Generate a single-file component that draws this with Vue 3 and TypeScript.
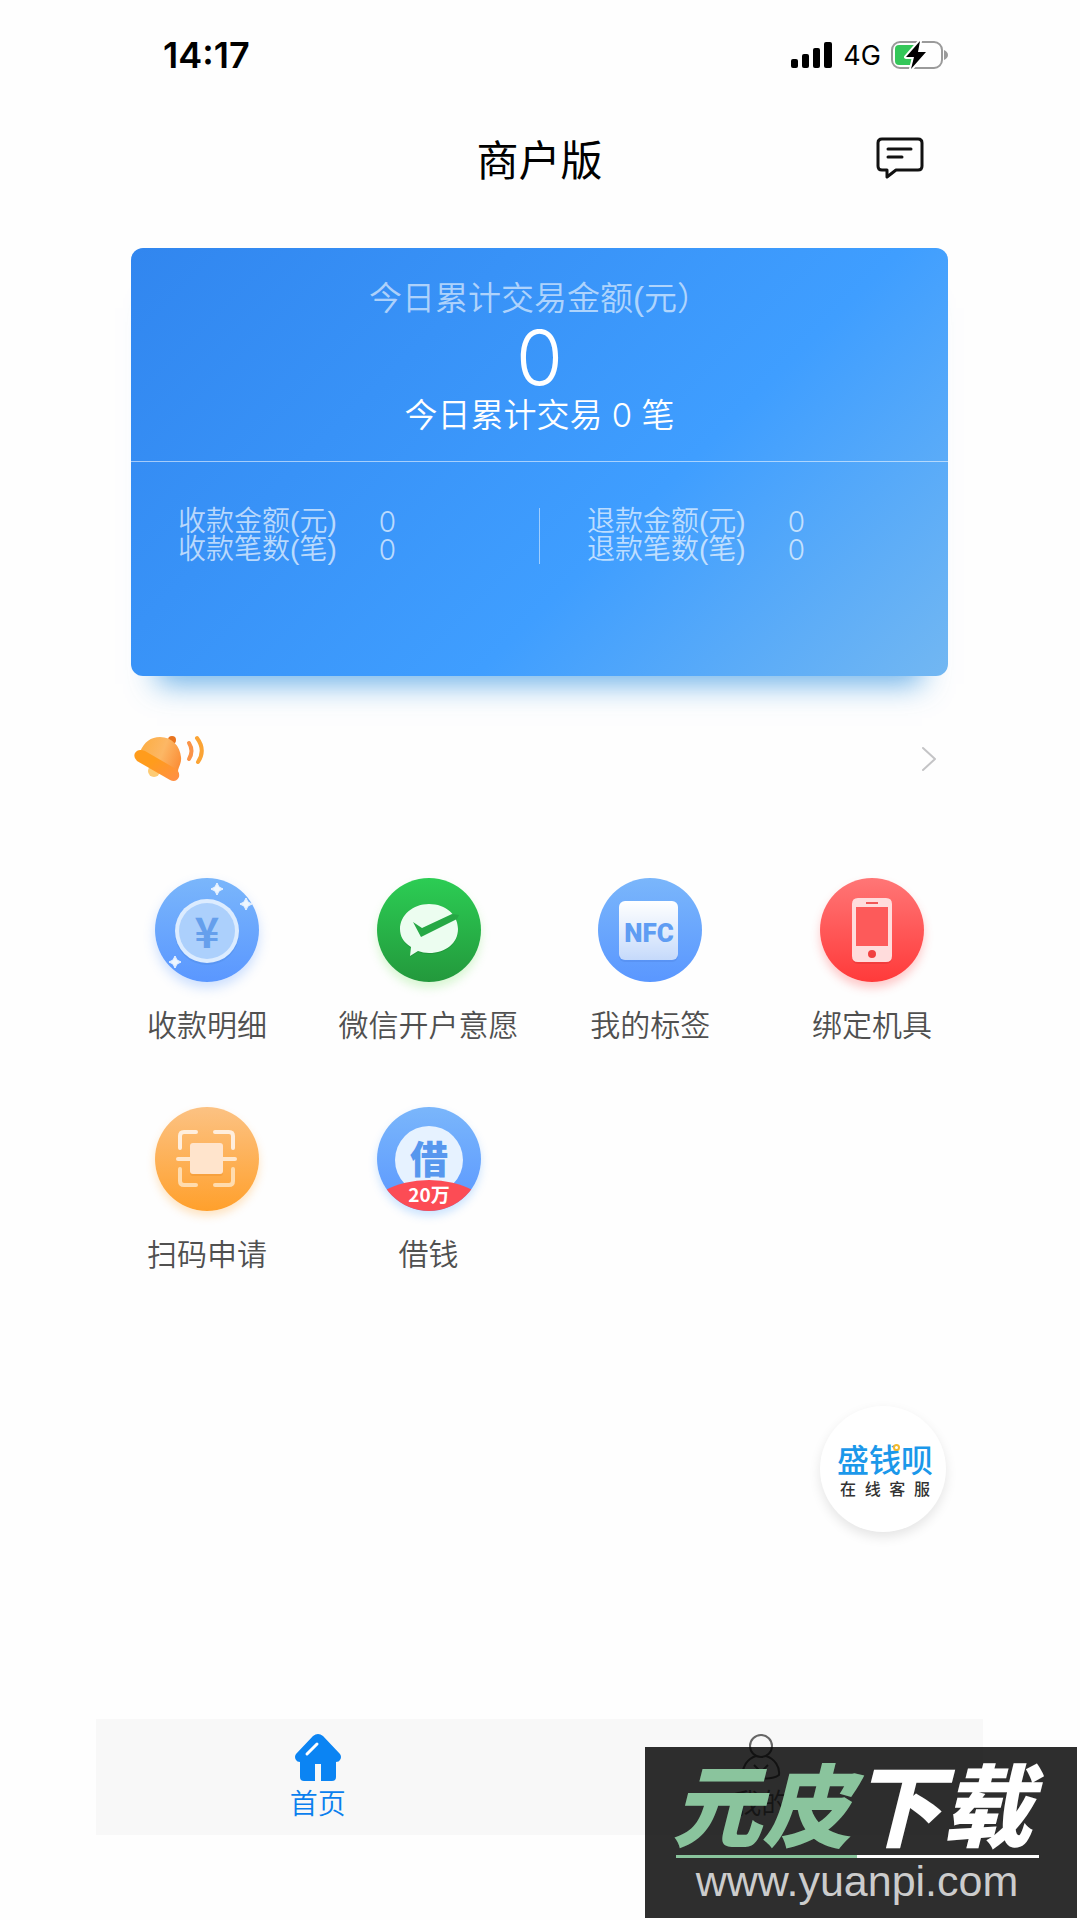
<script setup lang="ts">
interface Stat {
  label: string
  value: number
}

interface Entry {
  id: string
  label: string
}

const statGroups: Stat[][] = [
  [
    { label: '收款金额(元)', value: 0 },
    { label: '收款笔数(笔)', value: 0 },
  ],
  [
    { label: '退款金额(元)', value: 0 },
    { label: '退款笔数(笔)', value: 0 },
  ],
]

const entries: Entry[] = [
  { id: 'detail', label: '收款明细' },
  { id: 'wechat', label: '微信开户意愿' },
  { id: 'nfc', label: '我的标签' },
  { id: 'device', label: '绑定机具' },
  { id: 'scan', label: '扫码申请' },
  { id: 'loan', label: '借钱' },
]

const sparkles: number[][] = [
  [62, 11],
  [91, 26],
  [20, 84],
]

const serviceChars: string[] = ['在', '线', '客', '服']
</script>

<template>
  <div class="page">
    <div class="status">
      <span class="time">14:17</span>
      <div class="signals">
        <svg class="bars" viewBox="0 0 42 26" aria-hidden="true">
          <rect x="0" y="17" width="7" height="9" rx="2" />
          <rect x="11" y="12" width="7" height="14" rx="2" />
          <rect x="22" y="6" width="7" height="20" rx="2" />
          <rect x="33" y="0" width="8" height="26" rx="2" />
        </svg>
        <span class="network">4G</span>
        <svg class="battery" viewBox="0 0 58 30" aria-hidden="true">
          <rect x="1" y="2" width="50" height="26" rx="8" fill="none" stroke="#9a9a9a" stroke-width="2" />
          <path d="M53 10 Q57 12 57 15 Q57 18 53 20Z" fill="#9a9a9a" />
          <path d="M8 5 H24 V25 H8 Q4 25 4 21 V9 Q4 5 8 5Z" fill="#34c759" />
          <path d="M29 1 L15 17 H23 L20 29 L35 12 H27Z" fill="#000" stroke="#fff" stroke-width="4" paint-order="stroke" stroke-linejoin="round" />
        </svg>
      </div>
    </div>

    <header class="header">
      <h1>商户版</h1>
      <button class="message" type="button" aria-label="消息">
        <svg viewBox="0 0 48 42" fill="none" stroke="#111" stroke-width="3" stroke-linejoin="round" stroke-linecap="round">
          <path d="M6 2 H42 Q46 2 46 6 V29 Q46 33 42 33 H20 L11 40 V33 H6 Q2 33 2 29 V6 Q2 2 6 2Z" />
          <path d="M12 12 H35 M12 20 H26" />
        </svg>
      </button>
    </header>

    <main>
      <section class="card">
        <div class="total">
          <p class="caption">今日累计交易金额(元）</p>
          <p class="amount">0</p>
          <p class="count">今日累计交易 0 笔</p>
        </div>
        <div class="stats">
          <dl v-for="(group, i) in statGroups" :key="i" class="group">
            <div v-for="stat in group" :key="stat.label" class="stat">
              <dt>{{ stat.label }}</dt>
              <dd>{{ stat.value }}</dd>
            </div>
          </dl>
        </div>
      </section>

      <button class="notice" type="button" aria-label="公告">
        <svg class="bell" viewBox="0 0 74 50" aria-hidden="true">
          <defs>
            <linearGradient id="dome" x1="0" y1="0.3" x2="1" y2="0.7">
              <stop offset="0" stop-color="#fdae45" />
              <stop offset="0.5" stop-color="#fcb765" />
              <stop offset="1" stop-color="#fb8c34" />
            </linearGradient>
            <linearGradient id="brim" x1="0" y1="0" x2="1" y2="1">
              <stop offset="0.4" stop-color="#ff9c1c" />
              <stop offset="1" stop-color="#ff8e48" />
            </linearGradient>
          </defs>
          <circle cx="41" cy="6" r="4" fill="#e8741f" />
          <circle cx="23" cy="37" r="6" fill="#fdcb74" />
          <path d="M9 18 C13 8 20 3 29 3 C41 3 49 12 50 23 C51 30 46 34 47 40 L41 43 L10 24Z" fill="url(#dome)" />
          <path d="M14 17 L45 35 Q49 38 48 43 Q45 49 39 46 L6 27 Q2 23 4 19 Q7 14 14 17Z" fill="url(#brim)" />
          <path d="M58 9 Q63 17 58 25" fill="none" stroke="#fa9348" stroke-width="4" stroke-linecap="round" />
          <path d="M66 4 Q75 16 67 28" fill="none" stroke="#fba435" stroke-width="4" stroke-linecap="round" />
        </svg>
        <svg class="chevron" viewBox="0 0 16 26" fill="none" stroke="#c4c4c6" stroke-width="2" stroke-linecap="round" stroke-linejoin="round" aria-hidden="true">
          <path d="M2 2 L14 13 L2 24" />
        </svg>
      </button>

      <nav class="grid">
        <a v-for="entry in entries" :key="entry.id" href="#" class="entry">
          <span class="disc" :class="entry.id">
            <svg viewBox="0 0 104 104" aria-hidden="true">
              <defs>
                <linearGradient :id="'pale-' + entry.id" x1="0" y1="0" x2="0" y2="1">
                  <stop offset="0" stop-color="#fff" />
                  <stop offset="1" stop-color="#fff" stop-opacity="0.65" />
                </linearGradient>
              </defs>
              <template v-if="entry.id === 'detail'">
                <circle cx="52" cy="55" r="32" fill="#4a86df" opacity="0.35" />
                <circle cx="52" cy="53" r="32" fill="#dcecff" />
                <circle cx="52" cy="53" r="28" fill="#acd0fc" />
                <text class="yen" x="52" y="70">¥</text>
                <path v-for="s in sparkles" :key="s[0]" :transform="`translate(${s[0]} ${s[1]})`" d="M0 -6 Q1 -1 6 0 Q1 1 0 6 Q-1 1 -6 0 Q-1 -1 0 -6Z" fill="#eef6ff" stroke="#eef6ff" stroke-width="1" />
              </template>
              <template v-else-if="entry.id === 'wechat'">
                <path d="M52 27 C69 27 81 37 81 51 C81 66 69 76 52 76 Q46 76 41 74 L33 79 L34 70 C26 65 23 58 23 51 C23 37 36 27 52 27Z" fill="#1c8434" opacity="0.5" />
                <path d="M52 26 C69 26 81 37 81 51 C81 65 69 75 52 75 Q46 75 41 73 L33 78 L34 69 C26 64 23 58 23 51 C23 37 36 26 52 26Z" fill="#ecfdf0" />
                <path d="M36 44 L45 50 L75 36 L82 37 L80 41 L44 59Z" fill="#26a845" />
              </template>
              <template v-else-if="entry.id === 'nfc'">
                <rect x="21" y="25" width="59" height="59" rx="6" fill="#4379d6" opacity="0.25" />
                <rect x="21" y="23" width="59" height="59" rx="6" fill="url(#pale-nfc)" />
                <text class="nfc-text" x="51" y="64">NFC</text>
              </template>
              <template v-else-if="entry.id === 'device'">
                <rect x="32" y="21" width="40" height="65" rx="6" fill="#c92222" opacity="0.25" />
                <path fill-rule="evenodd" d="M38 20 H66 Q72 20 72 26 V78 Q72 84 66 84 H38 Q32 84 32 78 V26 Q32 20 38 20Z M36 29 V68 H68 V29Z M46 24 V26 H58 V24Z M52 72 A4 4 0 1 0 52 80 A4 4 0 1 0 52 72Z" fill="#ffdcdc" />
                <rect x="36" y="29" width="32" height="39" fill="#fd5a5a" />
              </template>
              <template v-else-if="entry.id === 'scan'">
                <g fill="none" stroke-width="4" stroke-linecap="round">
                  <path d="M25 41 V29 Q25 25 29 25 H41 M60 25 H74 Q78 25 78 29 V41" stroke="#ffeedd" />
                  <path d="M25 62 V74 Q25 78 29 78 H41 M60 78 H74 Q78 78 78 74 V62" stroke="#ffdcae" />
                  <path d="M23 52 H80" stroke="#ffe7cc" />
                </g>
                <rect x="35" y="38" width="33" height="31" rx="3" fill="#e88820" opacity="0.3" />
                <rect x="35" y="36" width="33" height="31" rx="3" fill="#ffe4cc" />
              </template>
              <template v-else>
                <defs>
                  <clipPath id="disc-clip"><circle cx="52" cy="52" r="52" /></clipPath>
                </defs>
                <circle cx="52" cy="53" r="34" fill="#e6f2ff" />
                <text class="loan-text" x="52" y="66">借</text>
                <ellipse cx="52" cy="108" rx="62" ry="35" fill="#fc4c55" clip-path="url(#disc-clip)" />
                <text class="loan-tag" x="52" y="95">20万</text>
              </template>
            </svg>
          </span>
          <span class="label">{{ entry.label }}</span>
        </a>
      </nav>
    </main>

    <nav class="tabs">
      <a href="#" class="tab active">
        <svg viewBox="0 0 48 48" aria-hidden="true">
          <path d="M19 2 Q24 -2 29 2 L46 20 Q48 23 46 26 Q45 28 42 28 V43 Q42 47 38 47 H27 V30 H21 V47 H10 Q6 47 6 43 V28 Q3 28 2 26 Q0 23 2 20Z" fill="#0b84f3" />
          <path d="M13 20 L23 10" stroke="#fff" stroke-width="3" stroke-linecap="round" />
        </svg>
        <span>首页</span>
      </a>
      <a href="#" class="tab">
        <svg viewBox="0 0 48 48" fill="none" stroke="#666" stroke-width="2" aria-hidden="true">
          <circle cx="24" cy="12" r="11" />
          <path d="M19 22 C10 25 5 33 6 41 C12 46 36 46 42 41 C43 33 38 25 29 22 M17 31 L24 38 L31 31" />
        </svg>
        <span>我的</span>
      </a>
    </nav>

    <button class="service" type="button">
      <span class="brand">盛钱呗</span>
      <span class="service-label"><span v-for="c in serviceChars" :key="c">{{ c }}</span></span>
    </button>

    <aside class="watermark">
      <p class="site"><span>元皮</span>下载</p>
      <p class="url">www.yuanpi.com</p>
    </aside>
  </div>
</template>

<style>
body {
  margin: 0;
  background: #fefefe;
}
</style>

<style scoped>
.page {
  position: relative;
  display: flex;
  flex-direction: column;
  box-sizing: border-box;
  min-height: 100vh;
  padding: 0 9% 85px 8.9%;
  overflow: hidden;
  font-family: "Noto Sans CJK SC", sans-serif;
  color: #000;
}
p, h1, dl, dd {
  margin: 0;
}
button {
  padding: 0;
  border: 0;
  background: none;
  font-family: inherit;
}
a {
  color: inherit;
  text-decoration: none;
}
svg {
  display: block;
}
.status {
  display: flex;
  align-items: center;
  justify-content: space-between;
  height: 110px;
  padding: 0 34px 0 67px;
  font-family: Inter, sans-serif;
}
.time {
  font-size: 36px;
  font-weight: 600;
}
.signals {
  display: flex;
  align-items: center;
  gap: 10px;
}
.bars {
  width: 42px;
  height: 26px;
}
.network {
  font-size: 27px;
}
.battery {
  width: 58px;
  height: 30px;
}
.header {
  display: grid;
  grid-template-columns: 1fr auto 1fr;
  align-items: center;
  height: 96px;
  padding: 0 59px;
}
.header h1 {
  grid-column: 2;
  font-size: 42px;
  font-weight: 400;
  line-height: 60px;
}
.message {
  justify-self: end;
}
.message svg {
  width: 48px;
  height: 42px;
}
.card {
  margin: 42px 35px 0;
  height: 428px;
  border-radius: 12px;
  background: linear-gradient(135deg, #3186ef 0%, #3f9eff 62%, #72b7f2 100%);
  box-shadow: 0 34px 28px -26px rgba(70, 158, 228, 0.8);
  color: #fff;
  font-family: "Liberation Sans", "Noto Sans CJK SC", sans-serif;
  font-weight: 350;
}
.total {
  display: flex;
  flex-direction: column;
  align-items: center;
  box-sizing: border-box;
  height: 214px;
  padding-top: 31px;
  border-bottom: 1px solid rgba(255, 255, 255, 0.55);
}
.caption,
.count {
  font-size: 33px;
  line-height: 40px;
}
.caption {
  color: rgba(255, 255, 255, 0.6);
}
.count {
  font-family: Inter, "Noto Sans CJK SC", sans-serif;
}
.amount {
  font-family: Inter, sans-serif;
  font-size: 76px;
  font-weight: 300;
  line-height: 76px;
}
.stats {
  display: flex;
  padding-top: 46px;
}
.group {
  flex: 1;
  height: 56px;
  padding-left: 47px;
}
.group + .group {
  border-left: 1px solid rgba(255, 255, 255, 0.5);
}
.stat {
  display: flex;
  gap: 42px;
  font-size: 28px;
  line-height: 28px;
  color: rgba(255, 255, 255, 0.66);
}
.stat dd {
  font-weight: 300;
  font-family: Inter, sans-serif;
}
.notice {
  display: flex;
  align-items: center;
  justify-content: space-between;
  width: 100%;
  height: 50px;
  margin-top: 58px;
  padding: 0 46px 0 35px;
}
.bell {
  width: 74px;
  height: 50px;
}
.chevron {
  width: 16px;
  height: 26px;
}
.grid {
  display: grid;
  grid-template-columns: repeat(4, 1fr);
  row-gap: 61px;
  margin-top: 94px;
}
.entry {
  display: flex;
  flex-direction: column;
  align-items: center;
  gap: 20px;
}
.disc {
  width: 104px;
  height: 104px;
  border-radius: 50%;
}
.disc svg {
  width: 104px;
  height: 104px;
}
.disc text {
  text-anchor: middle;
}
.detail,
.nfc,
.loan {
  background: linear-gradient(#7ab6fb, #5a97ff);
}
.detail {
  box-shadow: 0 6px 12px rgba(90, 151, 255, 0.3);
}
.loan {
  box-shadow: 0 5px 8px rgba(90, 170, 255, 0.3);
}
.wechat {
  background: linear-gradient(#2ccd54, #23993c);
  box-shadow: 0 6px 10px rgba(130, 230, 110, 0.3);
}
.device {
  background: linear-gradient(#ff7676, #ff3a3a);
  box-shadow: 0 6px 10px rgba(255, 80, 80, 0.3);
}
.scan {
  background: linear-gradient(#fcc283, #ffa02c);
  box-shadow: 0 5px 8px rgba(255, 170, 60, 0.3);
}
.yen {
  font: 700 42px "Noto Sans CJK SC", sans-serif;
  fill: #659fec;
}
.nfc-text {
  font: 900 26px Roboto, sans-serif;
  fill: #5f9df3;
}
.loan-text {
  font-size: 38px;
  font-weight: 900;
  fill: #5797ee;
}
.loan-tag {
  font-size: 19px;
  font-weight: 700;
  fill: #fff;
}
.label {
  font-size: 30px;
  line-height: 42px;
  padding-bottom: 2px;
  font-weight: 350;
  color: #505050;
  white-space: nowrap;
}
.tabs {
  display: flex;
  height: 116px;
  margin-top: auto;
  background: #f8f8f8;
}
.tab {
  flex: 1;
  display: flex;
  flex-direction: column;
  align-items: center;
  gap: 4px;
  padding-top: 15px;
  font-size: 28px;
  line-height: 32px;
  font-weight: 350;
  color: #777;
}
.tab.active {
  color: #0b7fee;
}
.tab svg {
  width: 48px;
  height: 48px;
}
.service {
  position: absolute;
  right: 134px;
  bottom: 388px;
  display: flex;
  flex-direction: column;
  align-items: center;
  justify-content: center;
  box-sizing: border-box;
  width: 126px;
  height: 126px;
  padding: 4px 0 0 4px;
  border-radius: 50%;
  background: #fff;
  box-shadow: 0 5px 12px rgba(0, 0, 0, 0.1);
  font-family: "Liberation Sans", "Noto Sans CJK SC", sans-serif;
}
.brand {
  position: relative;
  font-size: 32px;
  line-height: 37px;
  font-weight: 500;
  color: #1b98ea;
}
.brand::after {
  content: "";
  position: absolute;
  top: 1px;
  right: 33px;
  width: 3px;
  height: 3px;
  border: 2px solid #f2b92c;
  border-radius: 50%;
  background: #fff;
}
.service-label {
  display: flex;
  justify-content: space-between;
  width: 90px;
  font-size: 16px;
  line-height: 20px;
  font-weight: 500;
  color: #333;
}
.watermark {
  position: absolute;
  right: 3px;
  bottom: 2px;
  display: flex;
  flex-direction: column;
  align-items: center;
  box-sizing: border-box;
  width: 432px;
  height: 171px;
  padding-right: 8px;
  background: rgba(0, 0, 0, 0.82);
}
.site {
  margin-top: 16px;
  padding-right: 10px;
  font-family: "Liberation Sans", "Noto Sans CJK SC", sans-serif;
  font-size: 90px;
  line-height: 92px;
  font-weight: 900;
  font-style: italic;
  color: #fff;
}
.site span {
  color: #8ac49d;
}
.url {
  width: 363px;
  border-top: 3px solid;
  border-image: linear-gradient(90deg, #8ac49d 50%, #fff 50%) 1;
  font-family: "Liberation Sans", sans-serif;
  font-size: 43px;
  line-height: 46px;
  text-align: center;
  color: #ccc;
}
</style>
